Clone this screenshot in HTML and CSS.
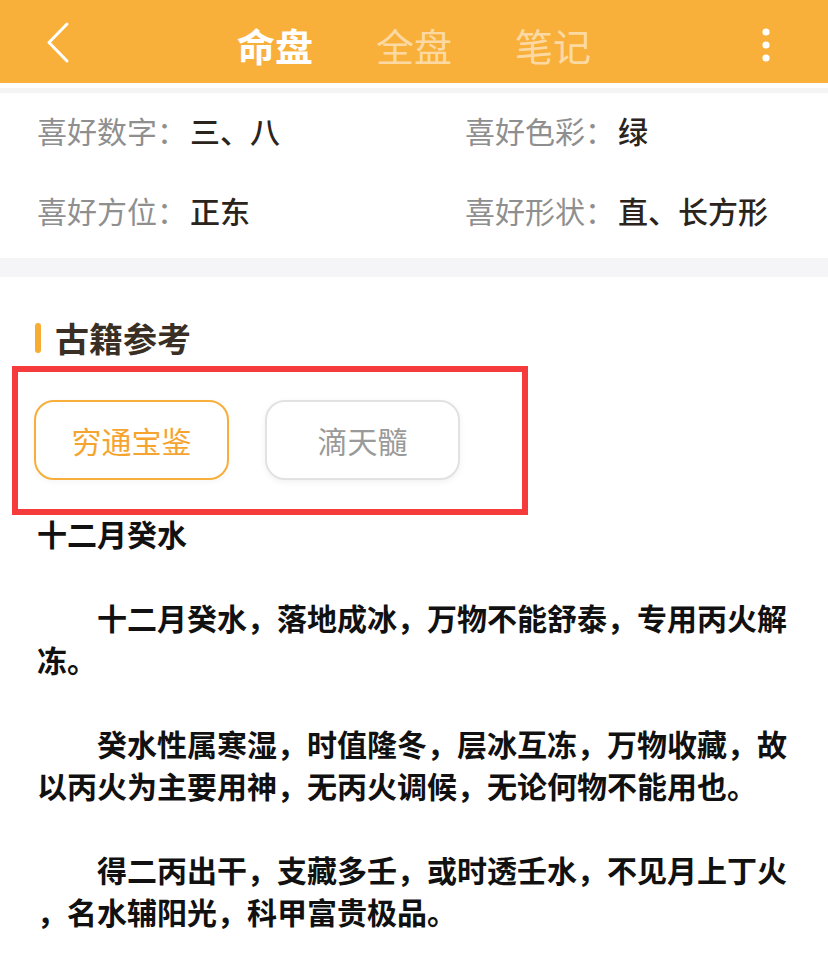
FILE: index.html
```html
<!DOCTYPE html>
<html lang="zh-CN">
<head>
<meta charset="utf-8">
<title>命盘</title>
<link rel="stylesheet" href="styles.css">
</head>
<body>
<div class="page">
  <header class="nav">
    <div class="nav-left">
      <svg class="back" width="25" height="44" viewBox="0 0 25 44"><path d="M21 3 L3 21.5 L21 40" fill="none" stroke="#fff" stroke-width="3" stroke-linecap="round" stroke-linejoin="round"/></svg>
    </div>
    <nav class="tabs">
      <span class="tab active">命盘</span>
      <span class="tab">全盘</span>
      <span class="tab">笔记</span>
    </nav>
    <div class="nav-right">
      <svg class="more" width="10" height="34" viewBox="0 0 10 34"><circle cx="5" cy="4" r="3.6" fill="#fff"/><circle cx="5" cy="17" r="3.6" fill="#fff"/><circle cx="5" cy="30" r="3.6" fill="#fff"/></svg>
    </div>
  </header>
  <div class="topline"></div>

  <section class="prefs">
    <div class="pref"><span class="label">喜好数字：</span><span class="value">三、八</span></div>
    <div class="pref"><span class="label">喜好色彩：</span><span class="value">绿</span></div>
    <div class="pref"><span class="label">喜好方位：</span><span class="value">正东</span></div>
    <div class="pref"><span class="label">喜好形状：</span><span class="value">直、长方形</span></div>
  </section>

  <div class="band"></div>

  <section class="books">
    <h2 class="sec-title"><span class="bar"></span>古籍参考</h2>
    <div class="book-tabs">
      <button class="book active">穷通宝鉴</button>
      <button class="book">滴天髓</button>
    </div>
    <div class="highlight"></div>
    <article class="text">
      <p class="head">十二月癸水</p>
      <p class="para">十二月癸水，落地成冰，万物不能舒泰，专用丙火解冻。</p>
      <p class="para">癸水性属寒湿，时值隆冬，层冰互冻，万物收藏，故以丙火为主要用神，无丙火调候，无论何物不能用也。</p>
      <p class="para">得二丙出干，支藏多壬，或时透壬水，不见月上丁火，名水辅阳光，科甲富贵极品。</p>
    </article>
  </section>
</div>
</body>
</html>
```

FILE: styles.css
```css
* { box-sizing: border-box; }
html, body { margin: 0; padding: 0; background: #fff; }
body {
  font-family: "Noto Sans CJK SC", "Noto Sans", sans-serif;
  width: 828px;
  overflow: hidden;
}
.page { position: relative; width: 828px; }

.nav {
  height: 83px;
  background: #F9B03B;
  display: grid;
  grid-template-columns: 1fr auto 1fr;
  align-items: center;
}
.nav-left { padding-left: 46px; display: flex; align-items: center; padding-top: 3px; }
.nav-right { justify-self: end; padding-right: 57px; display: flex; align-items: center; padding-top: 7px; }
.back, .more { display: block; }
.tabs { display: flex; gap: 63px; padding-top: 6px; }
.tab {
  font-size: 38px;
  line-height: 1;
  color: rgba(255, 255, 255, 0.55);
  font-weight: 400;
}
.tab.active { color: #fff; font-weight: 700; }

.topline {
  height: 10px;
  background: linear-gradient(#fff 0 5px, #f4f4f5 5px 10px);
}

.prefs {
  display: grid;
  grid-template-columns: 428px 1fr;
  grid-auto-rows: 74px;
  row-gap: 6px;
  padding: 0 0 11px 37px;
}
.pref { display: flex; align-items: center; font-size: 30px; line-height: 1; }
.label { color: #8f8f8f; }
.value { color: #2b241c; font-weight: 500; margin-left: 3px; }

.band { height: 19px; background: #f5f5f7; }

.books { padding: 41px 37px 40px 37px; position: relative; }
.sec-title {
  margin: 0 0 0 -2px;
  display: flex;
  align-items: center;
  font-size: 34px;
  line-height: 40px;
  font-weight: 700;
  color: #3a2f25;
}
.bar {
  width: 6px;
  height: 30px;
  border-radius: 3px;
  background: #F7AD32;
  margin-right: 14px;
}
.book-tabs { display: flex; gap: 36px; margin-top: 42px; margin-left: -3px; }
.book {
  width: 195px;
  height: 80px;
  border-radius: 20px;
  background: #fff;
  border: 2px solid #e2e2e2;
  font-family: inherit;
  font-size: 30px;
  color: #9a9a9a;
  padding: 0;
  box-shadow: 0 2px 6px rgba(0, 0, 0, 0.06);
}
.book.active { border-color: #F7AE3A; color: #F5A52F; box-shadow: 0 2px 6px rgba(0, 0, 0, 0.04); }

.highlight {
  position: absolute;
  left: 12px;
  top: 89px;
  width: 516px;
  height: 149px;
  border: 6px solid #F53B3B;
}

.text { margin-top: 32px; }
.text p {
  margin: 0;
  font-size: 30px;
  line-height: 42px;
  font-weight: 600;
  color: #111;
  line-break: anywhere;
}
.text .para { text-indent: 2em; margin-top: 42px; }
```
